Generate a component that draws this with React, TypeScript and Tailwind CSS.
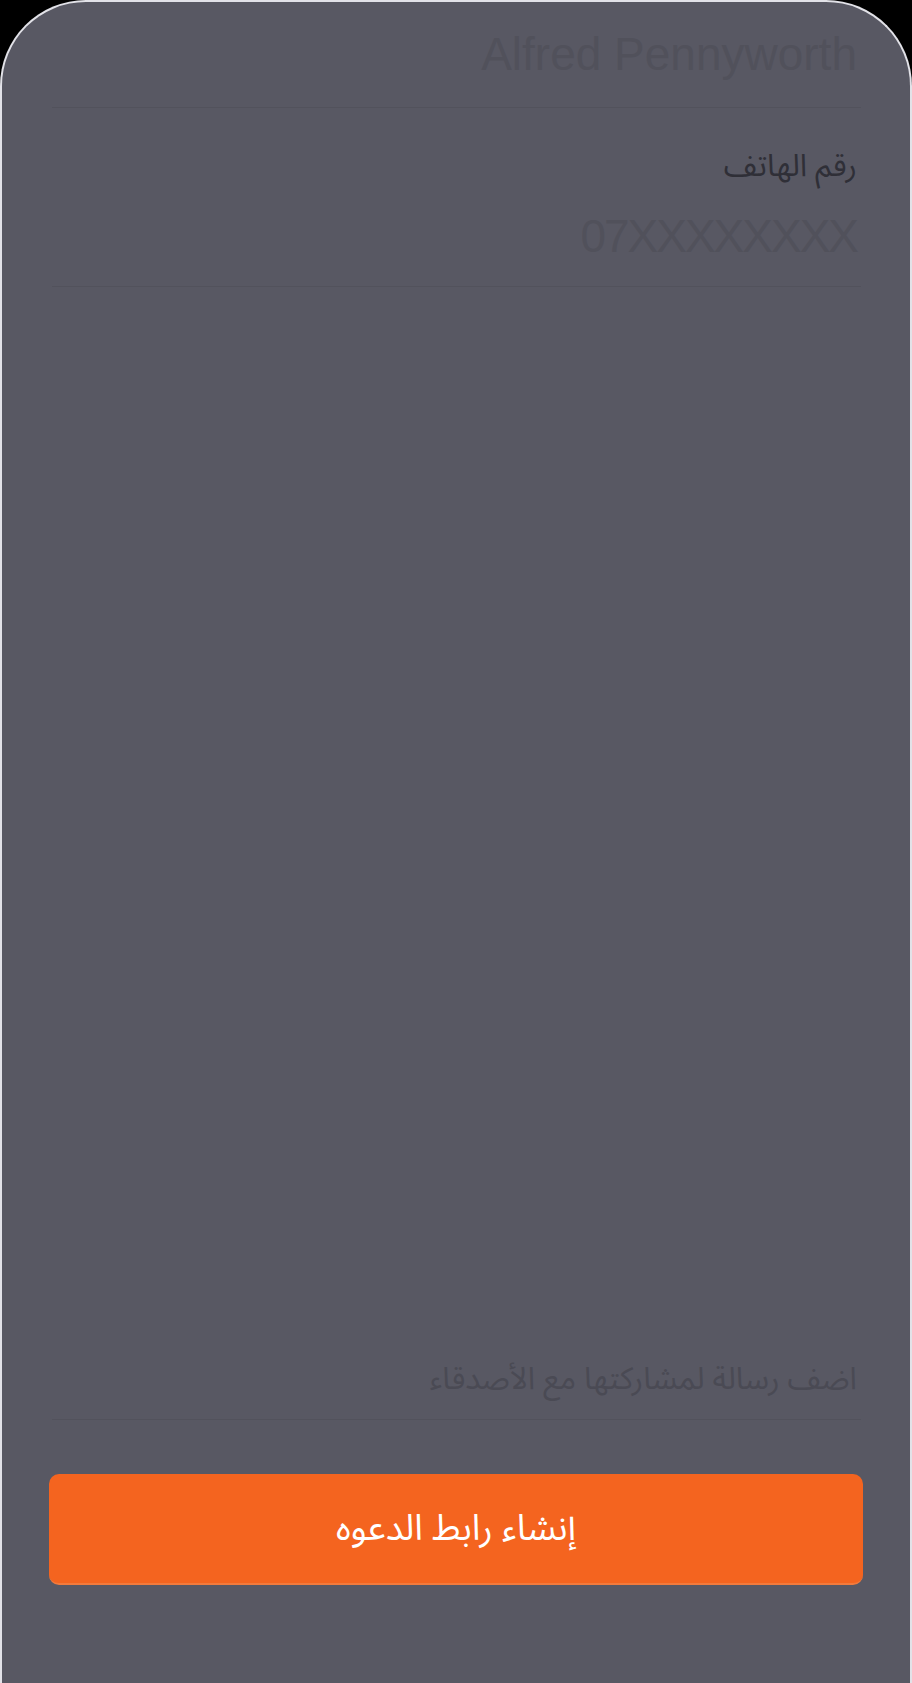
export default function App() {
  return (
    <div className="w-[912px] h-[1683px] bg-black overflow-hidden">
      <div className="h-full rounded-t-[86px] border-2 border-b-0 border-[#e2e2e8] bg-[#585863] pl-[50px] pr-[49px] flex flex-col">
        {/* name */}
        <div className="pt-[24px] pb-[25px] border-b border-[#52525c]">
          <div className="text-right pr-[4px] text-[46px] leading-[56px] text-[#51515b] font-['Liberation_Sans',Arial,sans-serif]">
            Alfred Pennyworth
          </div>
        </div>

        {/* phone */}
        <div className="border-b border-[#52525c]">
          <div
            dir="rtl"
            className="mt-[40px] pr-[4px] text-[31px] leading-[36px] text-[#2f2f37] font-['Noto_Sans_Arabic','DejaVu_Sans',sans-serif]"
          >
            رقم الهاتف
          </div>
          <div className="mt-[24px] mb-[22px] text-right pr-[4px] text-[46px] leading-[56px] tracking-[-2px] text-[#51515b] font-['Liberation_Sans',Arial,sans-serif]">
            07XXXXXXXX
          </div>
        </div>

        <div className="flex-1" />

        {/* message */}
        <div className="border-b border-[#52525c]">
          <div
            dir="rtl"
            className="pr-[4px] pb-[20px] text-[31px] leading-[40px] text-[#4a4a54] font-['Noto_Sans_Arabic','DejaVu_Sans',sans-serif]"
          >
            اضف رسالة لمشاركتها مع الأصدقاء
          </div>
        </div>

        <button
          dir="rtl"
          className="mt-[54px] mb-[98px] -ml-[3px] -mr-[2px] h-[111px] rounded-[10px] bg-[#f4641f] border-b-2 border-[#f27a3c] text-white text-[36px] font-['Noto_Sans_Arabic','DejaVu_Sans',sans-serif]"
        >
          إنشاء رابط الدعوه
        </button>
      </div>
    </div>
  );
}
